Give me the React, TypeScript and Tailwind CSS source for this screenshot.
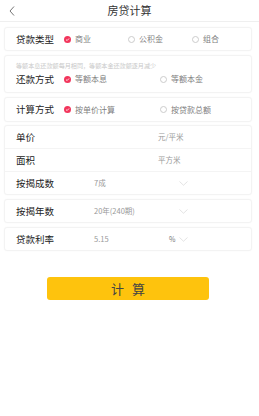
import React, { useState } from 'react';

const font = { fontFamily: '"Noto Sans CJK SC", "Noto Sans", sans-serif' };

const Radio = ({ on, label, onClick }: { on: boolean; label: string; onClick: () => void }) => (
  <button onClick={onClick} className="flex items-center gap-[4px]">
    {on ? (
      <span className="w-[7px] h-[7px] rounded-full bg-[#f2365c] flex items-center justify-center">
        <svg width="5" height="5" viewBox="0 0 10 10">
          <path d="M2 5.2 L4.2 7.2 L8 3" fill="none" stroke="#fff" strokeWidth="1.6" />
        </svg>
      </span>
    ) : (
      <span className="w-[7px] h-[7px] rounded-full border border-[#cccccc]" />
    )}
    <span className="text-[8px] text-[#808080]">{label}</span>
  </button>
);

const Chevron = () => (
  <svg width="9" height="5" viewBox="0 0 18 10">
    <path d="M1 1 L9 8.5 L17 1" fill="none" stroke="#d2d2d2" strokeWidth="1.2" />
  </svg>
);

const Card = ({ children, className = '' }: { children: React.ReactNode; className?: string }) => (
  <div className={`bg-white rounded-[3px] border border-[#f3f3f3] shadow-[0_0_2px_rgba(0,0,0,0.03)] ${className}`}>
    {children}
  </div>
);

const Label = ({ children }: { children: React.ReactNode }) => (
  <span className="w-[48px] shrink-0 text-[9.5px] font-normal text-[#222]">{children}</span>
);

export default function App() {
  const [loanType, setLoanType] = useState(0);
  const [repay, setRepay] = useState(0);
  const [calc, setCalc] = useState(0);

  return (
    <div className="w-[259px] h-[416px] bg-white flex flex-col" style={font}>
      {/* 顶部栏 */}
      <div className="relative h-[22px] flex items-center justify-center border-b border-[#efefef]">
        <svg className="absolute left-[9px] top-[6px]" width="6" height="10" viewBox="0 0 6 10">
          <path d="M5 0.5 L1 5 L5 9.5" fill="none" stroke="#666" strokeWidth="0.9" />
        </svg>
        <span className="text-[11px] text-[#333]">房贷计算</span>
      </div>

      <div className="pl-[4px] pr-[7px] pt-[5px] flex flex-col">
        {/* 贷款类型 */}
        <Card className="h-[24px] flex items-center pl-[11px]">
          <Label>贷款类型</Label>
          <div className="flex items-center">
            <div className="w-[64px]"><Radio on={loanType === 0} label="商业" onClick={() => setLoanType(0)} /></div>
            <div className="w-[64px]"><Radio on={loanType === 1} label="公积金" onClick={() => setLoanType(1)} /></div>
            <Radio on={loanType === 2} label="组合" onClick={() => setLoanType(2)} />
          </div>
        </Card>

        {/* 还款方式 */}
        <Card className="mt-[4px] h-[38px] flex flex-col pl-[11px] pt-[5px]">
          <span className="text-[6.1px] text-[#c8c8c8] leading-[9px] whitespace-nowrap">等额本息还款额每月相同，等额本金还款额逐月减少</span>
          <div className="flex items-center mt-[2px]">
            <Label>还款方式</Label>
            <div className="w-[96px]"><Radio on={repay === 0} label="等额本息" onClick={() => setRepay(0)} /></div>
            <Radio on={repay === 1} label="等额本金" onClick={() => setRepay(1)} />
          </div>
        </Card>

        {/* 计算方式 */}
        <Card className="mt-[4px] h-[25px] flex items-center pl-[11px]">
          <Label>计算方式</Label>
          <div className="w-[96px]"><Radio on={calc === 0} label="按单价计算" onClick={() => setCalc(0)} /></div>
          <Radio on={calc === 1} label="按贷款总额" onClick={() => setCalc(1)} />
        </Card>

        {/* 单价 面积 成数 */}
        <Card className="mt-[3px] flex flex-col">
          <div className="h-[23px] flex items-center pl-[11px] border-b border-[#f4f4f4]">
            <Label>单价</Label>
            <span className="ml-[94px] text-[7.5px] text-[#999]">元/平米</span>
          </div>
          <div className="h-[23px] flex items-center pl-[11px] border-b border-[#f4f4f4]">
            <Label>面积</Label>
            <span className="ml-[94px] text-[7.5px] text-[#999]">平方米</span>
          </div>
          <div className="h-[22px] flex items-center pl-[11px]">
            <Label>按揭成数</Label>
            <span className="ml-[30px] w-[85px] text-[7.5px] text-[#999]">7成</span>
            <Chevron />
          </div>
        </Card>

        {/* 按揭年数 */}
        <Card className="mt-[4px] h-[24px] flex items-center pl-[11px]">
          <Label>按揭年数</Label>
          <span className="ml-[30px] w-[85px] text-[7.5px] text-[#999]">20年(240期)</span>
          <Chevron />
        </Card>

        {/* 贷款利率 */}
        <Card className="mt-[4px] h-[24px] flex items-center pl-[11px]">
          <Label>贷款利率</Label>
          <span className="ml-[30px] w-[75px] text-[7.5px] text-[#999]">5.15</span>
          <span className="w-[10px] text-[7px] text-[#777]">%</span>
          <Chevron />
        </Card>
      </div>

      {/* 计算按钮 */}
      <div className="flex mt-[26px] pl-[47px]">
        <button className="w-[162px] h-[23px] rounded-[3px] bg-[#fec30d] text-[13px] text-[#444] tracking-[8px] pl-[8px]">
          计算
        </button>
      </div>
    </div>
  );
}
